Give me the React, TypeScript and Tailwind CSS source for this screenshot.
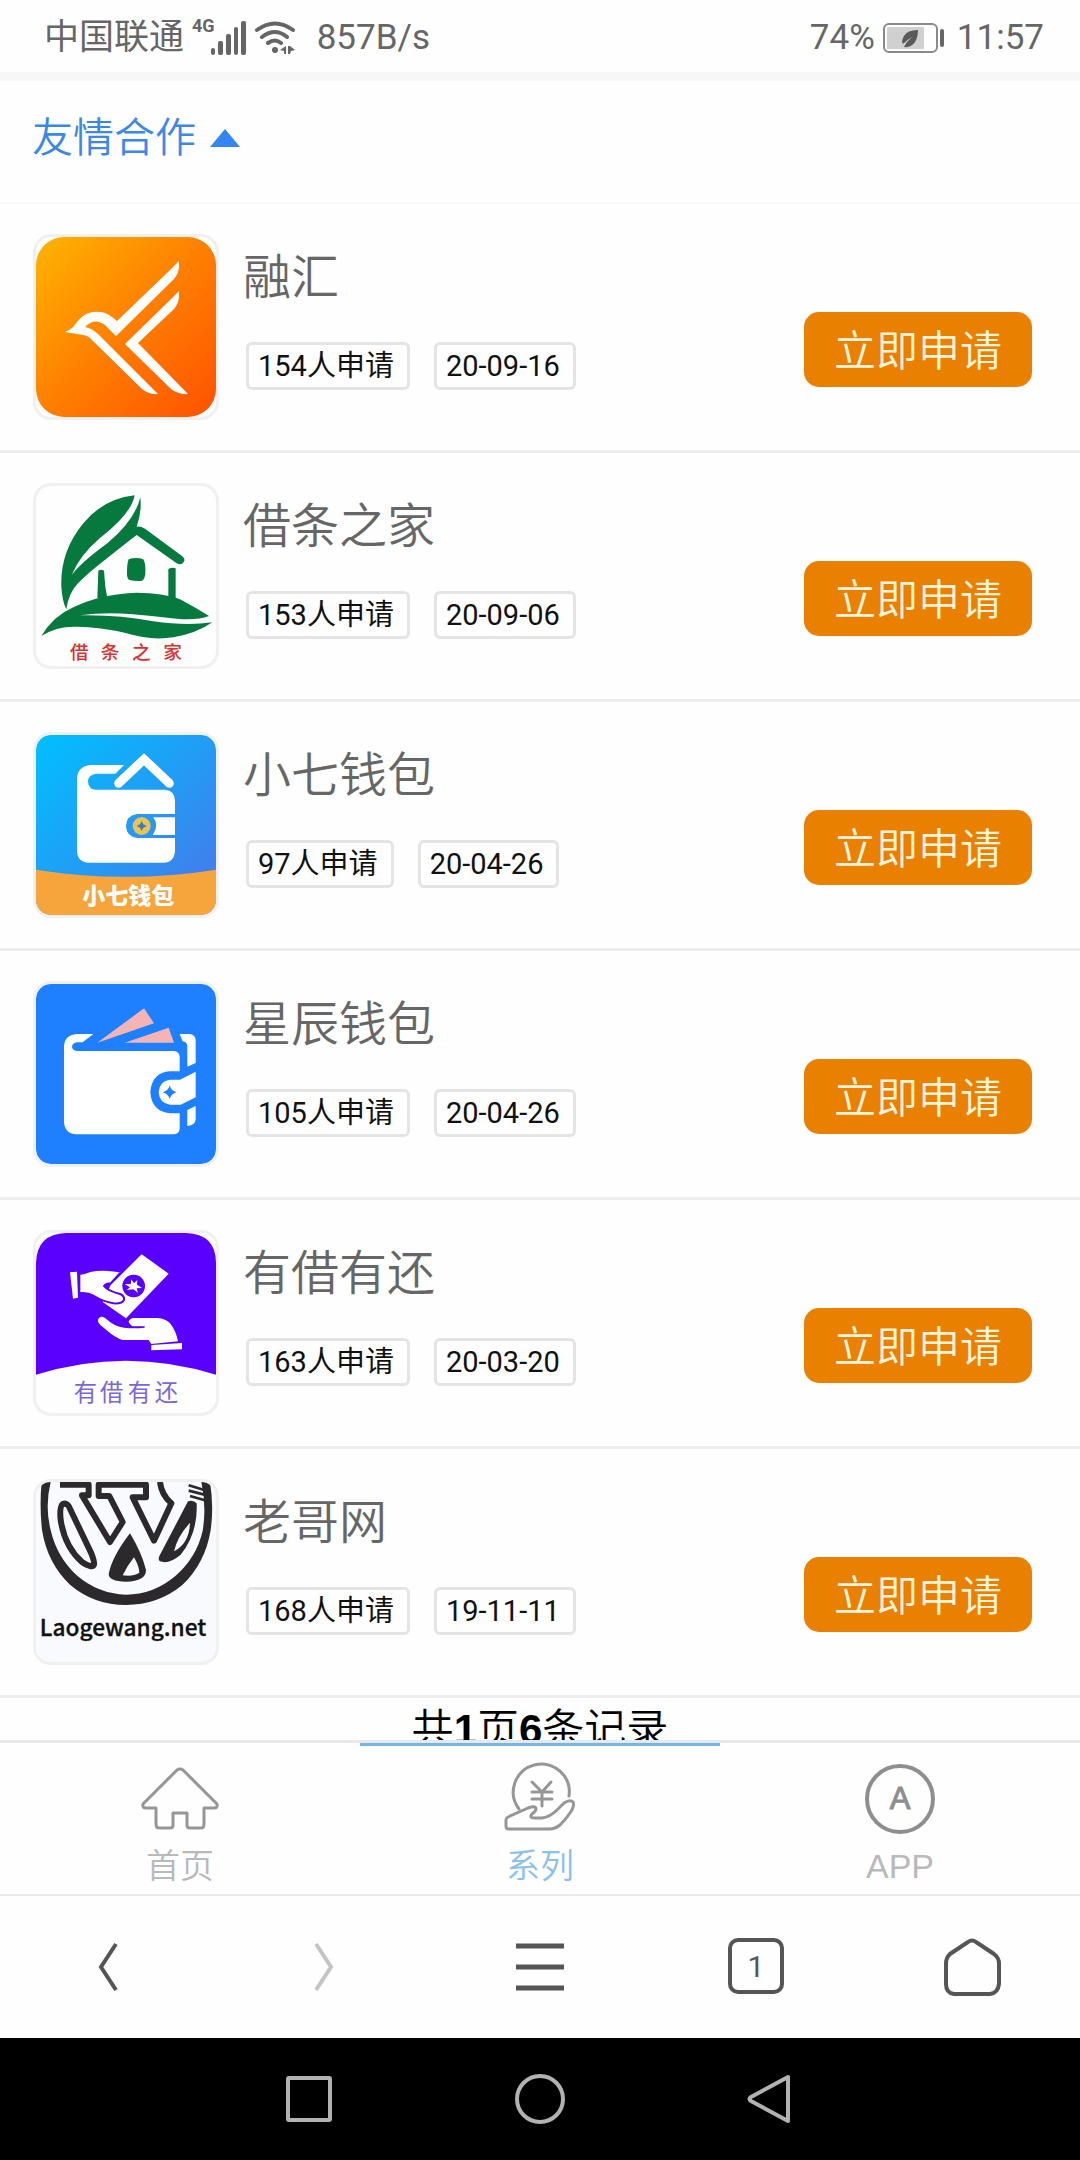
import React from "react";

// LOGOS
const BirdLogo = () => (
  <svg viewBox="0 0 180 180" className="block h-full w-full">
    <defs>
      <linearGradient id="bird-bg" x1="0" y1="0" x2="1" y2="1">
        <stop offset="0" stopColor="#ffb400" />
        <stop offset="0.5" stopColor="#ff7f00" />
        <stop offset="1" stopColor="#ff5200" />
      </linearGradient>
    </defs>
    <rect width="180" height="180" rx="28" fill="url(#bird-bg)" />
    <path
      fill="#fff"
      d="M143 24V29Q143 36 138 42L80 99L69 88Q58 80 49 90Q56 91 63 98L122 157Q113 158 106 152L57 104Q52 98 47 98L29 95Q37 92 41 85Q48 76 57 75Q69 74 76 80L81 84L132 35Z"
    />
    <path
      fill="#fff"
      d="M143 54V59Q143 66 138 72L102 106L152 157Q143 158 135 152L89 107L132 65Z"
    />
  </svg>
);

const HouseLogo = () => (
  <svg viewBox="48 48 540 540" className="block h-full w-full">
    <g fill="#067a3e">
      <path d="M344 76Q250 86 190 160Q120 245 124 350Q127 395 139 418Q146 370 172 342Q200 312 262 264Q325 214 350 195L470 280Q486 288 493 272Q495 265 486 258L375 176Q362 168 350 170Q366 125 361 82Q345 150 262 220Q185 276 155 315Q180 255 240 204Q335 130 344 76Z" />
      <path d="M235 302Q244 296 252 302L256 350L262 384H232Z" />
      <path d="M445 297Q456 291 467 295V384H445Z" />
      <path d="M326 268Q348 260 370 268Q378 282 376 312Q374 328 366 332Q347 334 328 330Q320 325 321 308Q321 280 326 268Z" />
      <path d="M64 498Q100 438 160 412Q240 372 350 368Q430 368 480 388Q530 415 567 438Q530 452 470 446Q400 438 330 432Q250 426 180 436Q300 434 400 454Q500 468 577 457Q530 490 460 502Q390 512 320 490Q240 470 170 470Q110 468 64 498Z" />
    </g>
    <text
      x="150 242 336 430"
      y="568"
      fontSize="56"
      fill="#e0302e"
      className="font-['Noto_Sans_CJK_SC',sans-serif] font-medium"
    >
      借条之家
    </text>
  </svg>
);

const SevenWalletLogo = () => (
  <svg viewBox="48 45 540 540" className="block h-full w-full">
    <defs>
      <linearGradient id="seven-bg" x1="0" y1="0" x2="1" y2="1">
        <stop offset="0" stopColor="#00c0ff" />
        <stop offset="0.5" stopColor="#229cf5" />
        <stop offset="0.85" stopColor="#3f80ec" />
        <stop offset="1" stopColor="#3f80ec" />
      </linearGradient>
    </defs>
    <rect x="48" y="45" width="540" height="540" rx="42" fill="url(#seven-bg)" />
    <path
      fill="#f6a43c"
      d="M48 449Q318 492 588 449V543Q588 585 546 585H90Q48 585 48 543Z"
    />
    <path
      fill="#fff"
      d="M212 135H312L286 161H228Q204 164 204 185Q206 208 228 209H435Q465 212 465 242V282H352Q319 286 318 318Q319 350 352 354H465V392Q463 427 430 428H206Q172 426 171 392V176Q173 138 212 135Z"
    />
    <path
      fill="none"
      stroke="#fff"
      strokeWidth="27"
      strokeLinecap="round"
      d="M296 190L372 118L448 190"
    />
    <path fill="#fff" d="M400 292H465V345H398Q418 318 400 292Z" />
    <circle cx="365" cy="318" r="27" fill="#eac255" />
    <path fill="#3a80b8" d="M365 303L370 313L380 318L370 323L365 333L360 323L350 318L360 313Z" />
    <text
      x="325"
      y="552"
      fontSize="69"
      textAnchor="middle"
      fill="#fff"
      className="font-['Noto_Sans_CJK_SC',sans-serif] font-black"
    >
      小七钱包
    </text>
  </svg>
);

const StarWalletLogo = () => (
  <svg viewBox="48 42 540 540" className="block h-full w-full">
    <rect x="48" y="42" width="540" height="540" rx="42" fill="#1f80ff" />
    <path fill="#f4b4b4" d="M372 115L402 160L232 218Z" />
    <path fill="#f4b4b4" d="M446 173L462 218H314Z" />
    <path
      fill="#fff"
      d="M170 192H220L188 217H170Q156 220 156 231Q158 242 170 243H462Q478 245 479 260V304H450Q395 308 391 367Q395 425 450 430H479V478Q477 492 462 493H168Q134 490 132 456V228Q134 195 170 192Z"
    />
    <path
      fill="#fff"
      d="M479 192H510Q526 195 527 210V279L502 290V228Q500 215 488 214Z"
    />
    <path
      fill="#fff"
      d="M527 305V382L482 404H450Q418 400 416 367Q418 332 450 329H480Z"
    />
    <path fill="#fff" d="M502 420L527 408V448Q526 466 502 468Z" />
    <path fill="#1f80ff" d="M449 346Q453 363 470 367Q453 371 449 388Q445 371 428 367Q445 363 449 346Z" />
  </svg>
);

const HandsLogo = () => (
  <svg viewBox="48 39 540 540" className="block h-full w-full">
    <path
      fill="#5a00ff"
      d="M138 39H498Q588 42 588 129V464Q318 380 48 464V129Q50 42 138 39Z"
    />
    <path fill="#fff" d="M150 157L171 155L174 233L159 236Z" />
    <path fill="#fff" d="M365 103L446 161L318 295L248 246L272 195Z" />
    <path
      fill="#fff"
      stroke="#5a00ff"
      strokeWidth="6"
      d="M178 162Q195 160 215 152Q245 145 304 155L272 190Q258 190 252 198Q262 212 300 222Q314 228 312 240Q306 252 280 250Q248 244 222 228Q200 216 178 220Z"
    />
    <circle cx="341" cy="198" r="34" fill="#5a00ff" />
    <path
      fill="#fff"
      d="M334 178L342 190L352 180L351 194L366 204L350 205L354 218L340 208L320 210L330 202L314 192L332 193Z"
    />
    <path
      fill="#fff"
      d="M238 293Q248 287 258 296Q284 320 312 323Q340 326 374 323V319H338Q326 312 326 304Q330 295 342 294H412Q438 296 450 310Q468 332 474 364L394 372L386 360H308Q284 352 262 332Q234 312 234 304Q233 297 238 293Z"
    />
    <path fill="#fff" d="M394 375L486 369V388L394 391Z" />
    <text
      x="161 240 323 404"
      y="543"
      fontSize="70"
      fill="#7a66dc"
      className="font-['Noto_Sans_CJK_SC',sans-serif]"
    >
      有借有还
    </text>
  </svg>
);

const LaogeLogo = () => (
  <svg viewBox="48 36 540 540" className="block h-full w-full">
    <rect x="48" y="36" width="540" height="540" rx="42" fill="#f9fafd" />
    <path
      fill="#2b292b"
      d="M65 36H92Q74 110 92 180Q110 260 170 316Q235 372 318 374Q400 374 466 318Q530 262 548 182Q560 110 544 36H570Q582 110 572 180Q556 280 486 346Q414 405 318 405Q222 405 150 344Q82 280 66 180Q58 105 65 36Z"
    />
    <g fill="none" stroke="#2b292b" strokeWidth="18" strokeLinejoin="round">
      <path d="M120 44H206V76H186L270 216L308 156L268 78H236V44H378V82H338L402 212L454 100Q424 74 420 36" />
      <path d="M128 102Q118 110 122 150Q134 230 186 276Q216 296 222 284Q224 276 214 250L146 108Q138 98 128 102Z" />
    </g>
    <path
      fill="#2b292b"
      fillRule="evenodd"
      d="M504 94Q520 88 530 100Q534 190 482 254Q446 284 420 274Q412 268 420 254ZM510 158Q472 200 462 244Q508 220 510 158Z"
    />
    <path
      fill="#2b292b"
      fillRule="evenodd"
      d="M330 190Q366 250 378 300Q378 334 318 335Q266 334 266 312Q276 260 330 190ZM342 262Q320 290 308 316Q340 320 358 308Q358 290 342 262Z"
    />
    <path
      fill="none"
      stroke="#2b292b"
      strokeWidth="8"
      d="M506 46L560 62M506 62L562 76M510 78L560 92"
    />
    <text
      x="309"
      y="498"
      fontSize="68"
      textAnchor="middle"
      fill="#111"
      stroke="#111"
      strokeWidth="1"
      className="font-['Noto_Sans_CJK_SC',sans-serif] font-medium"
    >
      Laogewang.net
    </text>
  </svg>
);

const partners = [
  { id: 1, title: "融汇", count: 154, date: "20-09-16", logo: <BirdLogo /> },
  { id: 2, title: "借条之家", count: 153, date: "20-09-06", logo: <HouseLogo /> },
  { id: 3, title: "小七钱包", count: 97, date: "20-04-26", logo: <SevenWalletLogo /> },
  { id: 4, title: "星辰钱包", count: 105, date: "20-04-26", logo: <StarWalletLogo /> },
  { id: 5, title: "有借有还", count: 163, date: "20-03-20", logo: <HandsLogo /> },
  { id: 6, title: "老哥网", count: 168, date: "19-11-11", logo: <LaogeLogo /> },
];

const StatusBar = () => (
  <div className="flex h-18 items-center justify-between pt-1 pr-9 pl-11 text-[35px] leading-10 text-[#666]">
    <div className="flex items-center">
      <span>中国联通</span>
      <span className="-mr-1 ml-2 self-start text-lg leading-4 font-bold">4G</span>
      {/* signal */}
      <svg width="36" height="34" viewBox="0 0 36 34" fill="#666">
        <rect x="0" y="27" width="4" height="7" rx="2" />
        <rect x="7" y="20" width="5" height="14" rx="2" />
        <rect x="15" y="13" width="5" height="21" rx="2" />
        <rect x="23" y="6" width="4" height="28" rx="2" />
        <rect x="30" y="0" width="5" height="34" rx="2" />
      </svg>
      {/* wifi */}
      <svg
        width="40"
        height="34"
        viewBox="0 0 40 34"
        className="ml-2"
        fill="none"
        stroke="#666"
        strokeWidth="4"
        strokeLinecap="round"
      >
        <path d="M2 9Q20 -4 38 9M7 16Q20 6 32 16M13 22Q20 17 26 22" />
        <circle cx="20" cy="29" r="3" fill="#666" stroke="none" />
        <path fill="#666" stroke="none" d="M25 29L31 25V33H29V30ZM33 25H35L40 29L36 30L35 33H33Z" />
      </svg>
      <span className="ml-[22px]">857B/s</span>
    </div>
    <div className="flex items-center">
      <span>74%</span>
      {/* battery */}
      <svg width="62" height="30" viewBox="0 0 62 30" className="mr-3 ml-2">
        <rect x="1" y="1" width="53" height="28" rx="5" fill="none" stroke="#8a8a8a" strokeWidth="2" />
        <rect x="4" y="4" width="37" height="22" rx="1" fill="#d0d0d0" />
        <path fill="#5a5a5a" d="M35 7Q24 7 21 13Q18 18 20 21Q24 17 29 14Q24 18 21 24Q28 25 32 19Q35 14 35 7Z" />
        <rect x="57" y="6" width="4" height="18" rx="2" fill="#666" />
      </svg>
      <span>11:57</span>
    </div>
  </div>
);

const PartnerRow = ({ title, count, date, logo }: (typeof partners)[number]) => (
  <li className="flex items-start border-b-3 border-[#eee] pt-[30px] pr-12 pb-[30px] pl-[33px]">
    <div className="size-[186px] shrink-0 overflow-hidden rounded-[18px] border-3 border-[#f0f0f0]">
      {logo}
    </div>
    <div className="ml-6 flex-1 pt-3.5">
      <h2 className="text-5xl leading-[60px] font-[350] text-[#666]">{title}</h2>
      <div className="mt-[34px] ml-[3px] flex gap-6 text-[29px] leading-[42px] text-[#111]">
        <span className="rounded-md border-3 border-[#e4e4e4] pr-[13px] pl-[9px]">{count}人申请</span>
        <span className="rounded-md border-3 border-[#e4e4e4] pr-[13px] pl-[9px]">{date}</span>
      </div>
    </div>
    <button className="mt-[78px] h-[75px] w-57 rounded-[15px] bg-[#ea8000] pt-1 text-[42px] leading-[71px] font-[350] text-[#fff3dc]">
      立即申请
    </button>
  </li>
);

const TabBar = () => (
  <nav className="grid grid-cols-3 border-t-3 border-b-2 border-[#e8e8e8] text-center font-['Liberation_Sans','Noto_Sans_CJK_SC',sans-serif] text-[34px] leading-[44px] font-[350] text-[#b9b9b9]">
    <a href="#home" className="flex flex-col items-center border-t-3 border-transparent pt-4 pb-1.5">
      <svg width="80" height="72" viewBox="0 0 80 72" fill="none" stroke="#969696" strokeWidth="3" strokeLinejoin="round">
        <path d="M37 8Q40 6 43 8L77 42Q78 46 74 46H64V62Q64 66 61 66H50Q47 66 47 63V51H33V63Q33 66 30 66H19Q16 66 16 62V46H6Q2 46 3 42Z" />
      </svg>
      <span className="mt-2.5">首页</span>
    </a>
    <a href="#series" className="flex flex-col items-center border-t-3 border-[#74b5e8] pt-4 pb-1.5 text-[#8ac0f0]">
      <svg
        width="80"
        height="72"
        viewBox="0 0 80 72"
        fill="none"
        stroke="#969696"
        strokeWidth="3"
        strokeLinecap="round"
        strokeLinejoin="round"
      >
        <path d="M19 47A28 28 0 1 1 69 34" />
        <path d="M32 20L42 30L51 20M42 30V44M32 30H52M32 37H52" />
        <path d="M8 55L28 46Q36 43 36 47Q36 49 32 52Q29 56 34 56H42Q50 55 57 48L64 41Q70 37 73 40Q75 44 70 51Q66 57 60 63Q55 67 49 67H9Q6 67 6 64V58Q6 56 8 55Z" />
      </svg>
      <span className="mt-2.5">系列</span>
    </a>
    <a href="#app" className="flex flex-col items-center border-t-3 border-transparent pt-4 pb-1.5">
      <svg width="80" height="72" viewBox="0 0 80 72">
        <circle cx="40" cy="37" r="33" fill="none" stroke="#8e8e8e" strokeWidth="4" />
        <text x="40" y="47" fontSize="31" textAnchor="middle" fill="#8e8e8e" stroke="#8e8e8e">
          A
        </text>
      </svg>
      <span className="mt-2.5">APP</span>
    </a>
  </nav>
);

const BrowserBar = () => (
  <div className="grid h-[142px] grid-cols-5 place-items-center">
    <button aria-label="后退">
      <svg width="80" height="80" fill="none" stroke="#555" strokeWidth="4">
        <path d="M48 17L33 40L48 63" />
      </svg>
    </button>
    <button aria-label="前进">
      <svg width="80" height="80" fill="none" stroke="#c4c4c4" strokeWidth="4">
        <path d="M32 17L47 40L32 63" />
      </svg>
    </button>
    <button aria-label="菜单">
      <svg width="80" height="80" fill="none" stroke="#555" strokeWidth="5">
        <path d="M16 19H64M16 40H64M16 61H64" />
      </svg>
    </button>
    <button aria-label="窗口">
      <svg width="80" height="80" fill="none" stroke="#555" strokeWidth="4">
        <rect x="14" y="13" width="52" height="52" rx="8" />
        <text x="40" y="50" fontSize="30" textAnchor="middle" fill="#555" stroke="none">
          1
        </text>
      </svg>
    </button>
    <button aria-label="主页">
      <svg width="80" height="80" fill="none" stroke="#555" strokeWidth="4" strokeLinejoin="round">
        <path d="M36 15Q40 12 44 15L62 27Q67 31 67 36V57Q66 66 58 67H22Q14 66 14 57V36Q14 31 18 27Z" />
      </svg>
    </button>
  </div>
);

const SystemNav = () => (
  <div className="flex h-[122px] items-center justify-center gap-45 bg-black">
    <button aria-label="最近任务">
      <svg width="50" height="50" fill="none" stroke="#b2b2b2" strokeWidth="4">
        <rect x="3" y="4" width="42" height="42" rx="1" />
      </svg>
    </button>
    <button aria-label="桌面">
      <svg width="50" height="50" fill="none" stroke="#b2b2b2" strokeWidth="4">
        <circle cx="25" cy="25" r="23" />
      </svg>
    </button>
    <button aria-label="返回">
      <svg width="50" height="50" fill="none" stroke="#b2b2b2" strokeWidth="4" strokeLinejoin="round">
        <path d="M43 3V47L6 27Q3 25 6 23Z" />
      </svg>
    </button>
  </div>
);

const App = () => {
  return (
    // wrapper
    <div className="flex min-h-screen flex-col bg-[#fefefe] font-['Roboto','Noto_Sans_CJK_SC',sans-serif]">
      <StatusBar />
      {/* HEADING */}
      <div className="flex items-center border-t-9 border-b-2 border-t-[#f7f7f7] border-b-[#f8f8f8] px-8 pt-7 pb-[35px] text-[41px] leading-[58px] text-[#3c88ea]">
        <h1 className="font-[350]">友情合作</h1>
        <svg width="30" height="18" viewBox="0 0 30 18" className="ml-3.5 fill-[#3585f0]">
          <path d="M15 0L30 18H0Z" />
        </svg>
      </div>
      {/* LIST */}
      <main className="flex-1">
        <ul>
          {partners.map((partner) => (
            <PartnerRow key={partner.id} {...partner} />
          ))}
        </ul>
        <p className="h-[42px] overflow-hidden text-center font-['Liberation_Sans','Noto_Sans_CJK_SC',sans-serif] text-[42px] leading-[64px] font-[350] text-black">
          共<b className="font-bold">1</b>页<b className="font-bold">6</b>条记录
        </p>
      </main>
      <TabBar />
      <BrowserBar />
      <SystemNav />
    </div>
  );
};

export default App;
